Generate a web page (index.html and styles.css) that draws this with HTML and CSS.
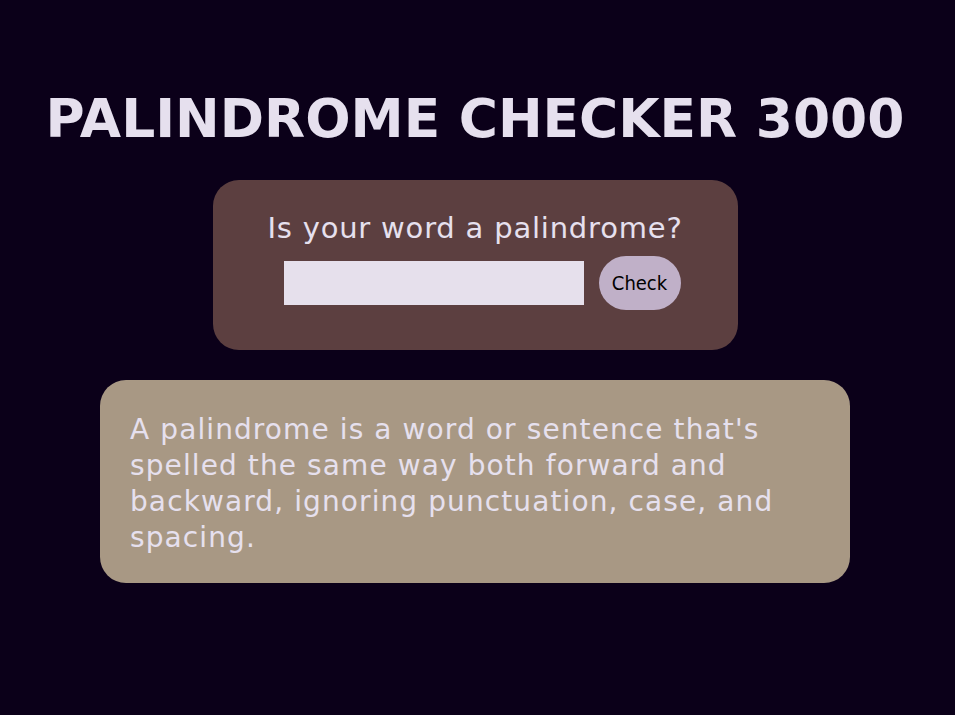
FILE: index.html
```html
<!DOCTYPE html>
<html lang="en">
<head>
<meta charset="utf-8">
<title>Palindrome Checker</title>
<link rel="stylesheet" href="styles.css">
</head>
<body>
<main class="page">
  <h1 class="title">PALINDROME CHECKER 3000</h1>
  <section class="checker">
    <label class="prompt" for="text-input">Is your word a palindrome?</label>
    <div class="row">
      <input id="text-input" class="text-input" type="text">
      <button id="check-btn" class="check-btn">Check</button>
    </div>
  </section>
  <section class="info">
    <p class="info-text">A palindrome is a word or sentence that's spelled the same way both forward and backward, ignoring punctuation, case, and spacing.</p>
  </section>
</main>
</body>
</html>
```
FILE: styles.css
```css
* { box-sizing: border-box; }
html, body {
  margin: 0;
  padding: 0;
  background: #0b0019;
  min-height: 100%;
}
body {
  font-family: "DejaVu Sans", Verdana, sans-serif;
  color: #e6e0ee;
}
.page {
  display: flex;
  flex-direction: column;
  align-items: center;
  padding-top: 88px;
  padding-right: 5px;
}
.title {
  margin: 0;
  font-size: 53.4px;
  font-weight: bold;
  line-height: 62px;
  color: #e6e0ee;
  white-space: nowrap;
}
.checker {
  margin-top: 30px;
  width: 525px;
  height: 170px;
  background: #5c3f40;
  border-radius: 26px;
  padding-top: 31px;
  display: flex;
  flex-direction: column;
  align-items: center;
}
.prompt {
  font-size: 29px;
  line-height: 34px;
  letter-spacing: 0.8px;
  color: #e6e0ee;
}
.row {
  margin-top: 11px;
  padding-left: 14px;
  display: flex;
  align-items: center;
  gap: 15px;
}
.text-input {
  width: 300px;
  height: 44px;
  border: none;
  background: #e6e0ec;
  padding: 0 8px;
  margin: 0;
  font-family: "DejaVu Sans", sans-serif;
  font-size: 18px;
  outline: none;
}
.check-btn {
  width: 82px;
  height: 54px;
  border: none;
  border-radius: 27px;
  background: #c0b0c8;
  color: #000000;
  font-family: "DejaVu Sans Condensed", "DejaVu Sans", sans-serif;
  font-size: 20px;
  padding: 0;
  margin: 0;
}
.info {
  margin-top: 30px;
  width: 750px;
  height: 203px;
  background: #a89884;
  border-radius: 26px;
  padding: 32px 30px 0;
}
.info-text {
  margin: 0;
  font-size: 28px;
  line-height: 36px;
  letter-spacing: 1.1px;
  color: #e6e0ee;
}
```
